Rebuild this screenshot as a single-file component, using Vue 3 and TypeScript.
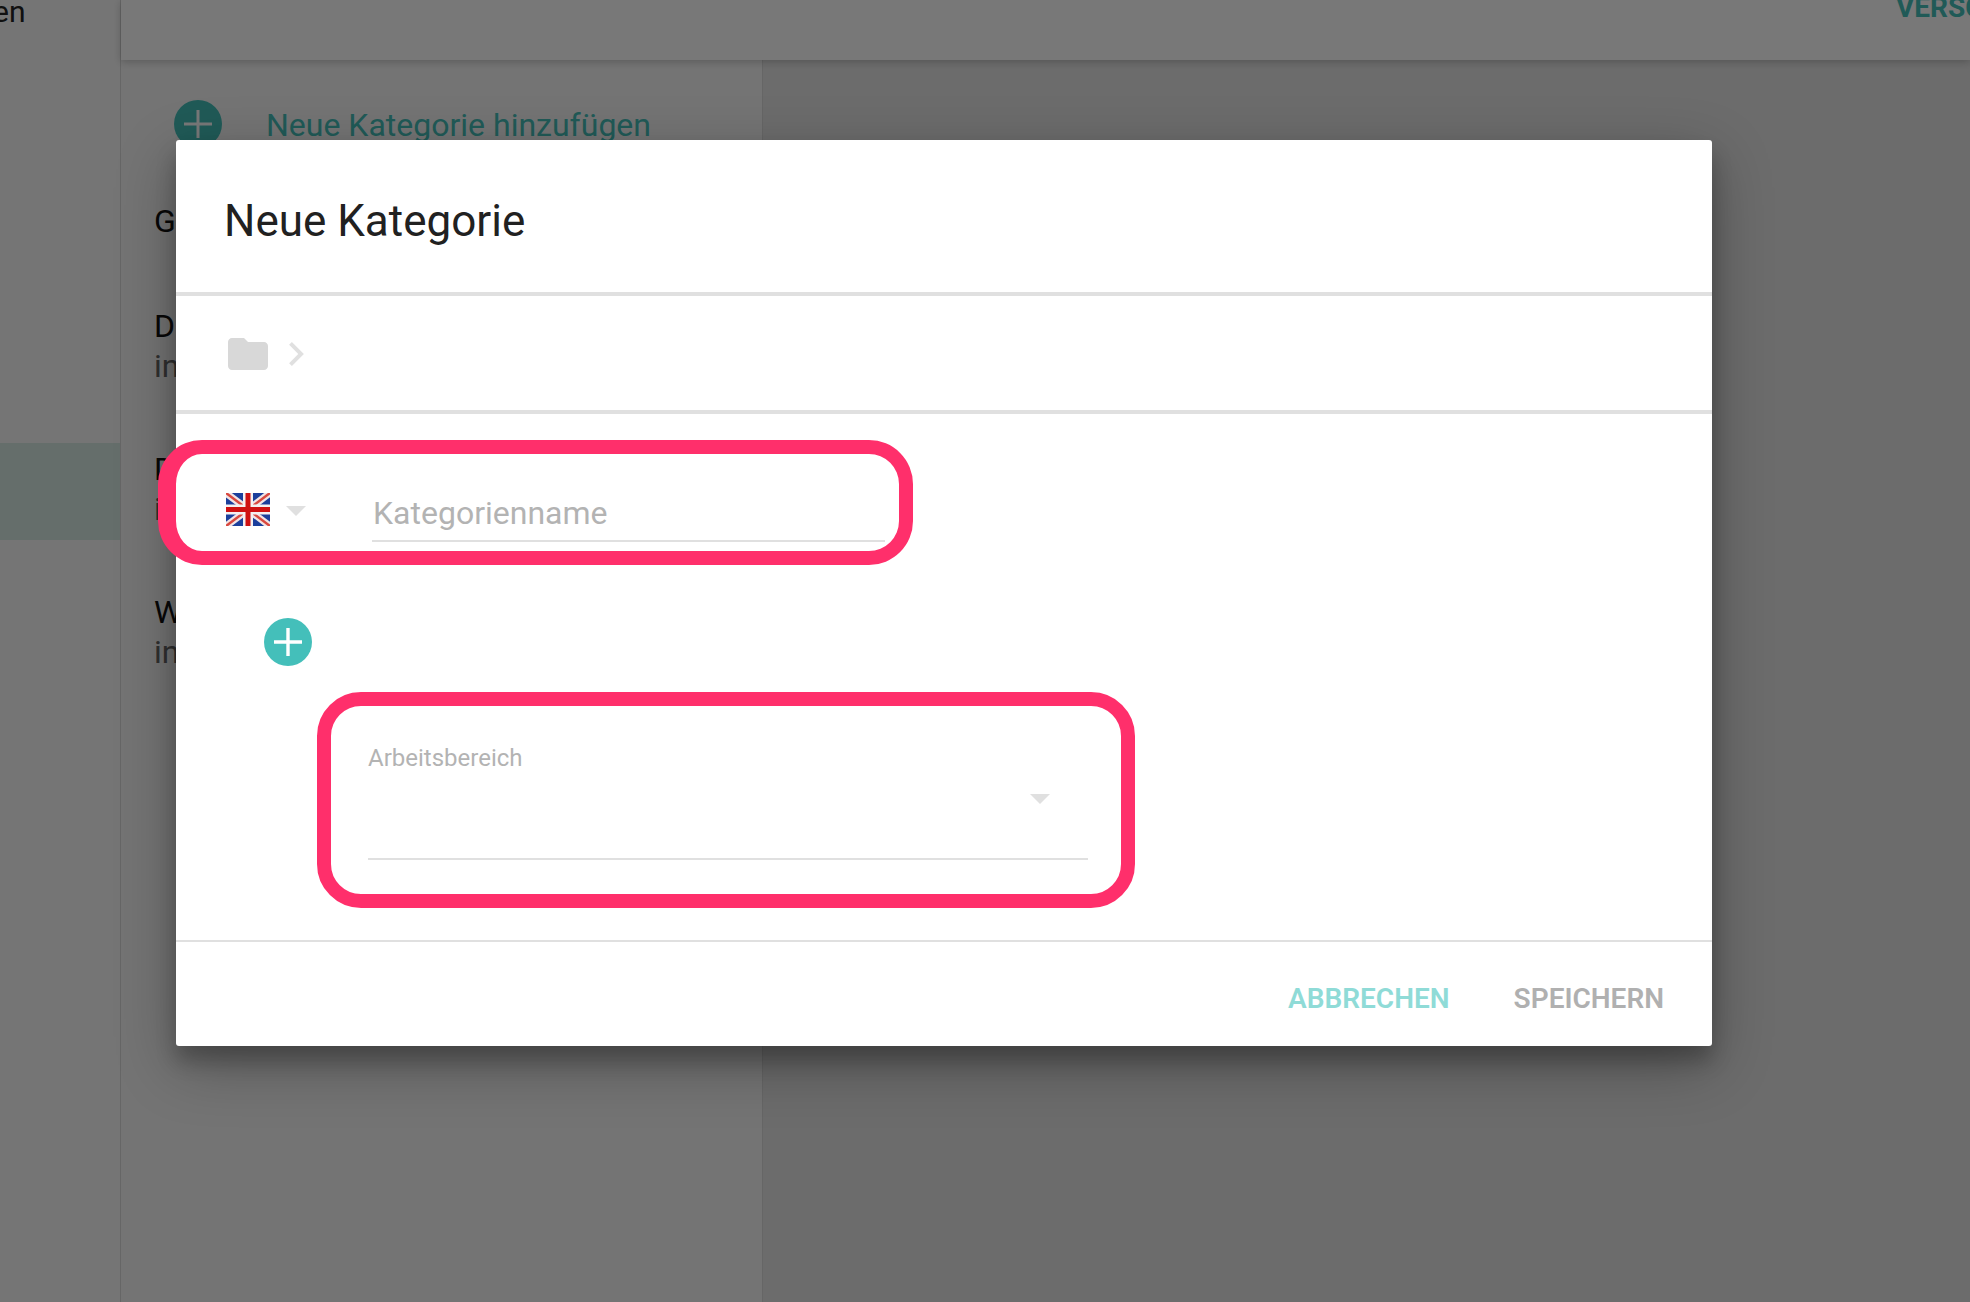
<script setup lang="ts">
const rows = [
  { title: 'D', sub: 'in' },
  { title: 'D', sub: 'in' },
  { title: 'W', sub: 'in' },
]
</script>

<template>
  <div class="page">
    <aside class="nav">
      <div class="nav-text">en</div>
      <div class="nav-selected"></div>
    </aside>
    <div class="main">
      <header class="topbar"><span class="top-action">VERSCHIEBEN</span></header>
      <div class="content">
        <section class="list">
          <div class="add-row">
            <span class="add-dark">
              <svg width="28" height="28" viewBox="0 0 28 28"><path d="M12.5 0h3v12.5H28v3H15.500V28h-3V15.500H0v-3h12.500z" fill="#fff" /></svg>
            </span>
            <span class="add-label">Neue Kategorie hinzufügen</span>
          </div>
          <div class="group-title">G</div>
          <div v-for="(r, i) in rows" :key="i" class="item">
            <div class="item-title">{{ r.title }}</div>
            <div class="item-sub">{{ r.sub }}</div>
          </div>
        </section>
        <section class="detail"></section>
      </div>
    </div>

    <div class="scrim"></div>

    <div class="dialog">
      <h2 class="dialog-title">Neue Kategorie</h2>
      <div class="crumbs">
        <svg width="40" height="32" viewBox="2 4 20 16"><path d="M10 4H4c-1.100 0-2 .9-2 2v12c0 1.100.9 2 2 2h16c1.100 0 2-.9 2-2V8c0-1.100-.9-2-2-2h-8l-2-2z" fill="#d8d8d8" /></svg>
        <svg width="15" height="24" viewBox="8.590 6 7.410 12"><path d="M10 6L8.590 7.410 13.170 12l-4.580 4.590L10 18l6-6z" fill="#e0e0e0" /></svg>
      </div>
      <div class="form">
        <div class="lang-row">
          <svg class="flag" width="44" height="33" viewBox="0 0 44 33">
            <rect width="44" height="33" fill="#1b3f9c" />
            <path d="M0 0L44 33M44 0L0 33" stroke="#f1e4e4" stroke-width="7" />
            <path d="M0 0L44 33M44 0L0 33" stroke="#d9483f" stroke-width="2.500" />
            <path d="M22 0V33M0 16.500H44" stroke="#f4f0f0" stroke-width="10" />
            <path d="M22 0V33M0 16.500H44" stroke="#cf1111" stroke-width="5" />
          </svg>
          <span class="tri lang-tri"></span>
          <div class="name-field">Kategorienname</div>
        </div>
        <span class="add-round">
          <svg width="28" height="28" viewBox="0 0 28 28"><path d="M12.300 0h3.400v12.300H28v3.400H15.700V28h-3.400V15.700H0v-3.400h12.300z" fill="#fff" /></svg>
        </span>
        <div class="work-field">
          <div class="work-label">Arbeitsbereich</div>
          <span class="tri work-tri"></span>
        </div>
      </div>
      <footer class="actions">
        <span class="btn cancel">ABBRECHEN</span>
        <span class="btn save">SPEICHERN</span>
      </footer>
      <div class="mark mark-one"></div>
      <div class="mark mark-two"></div>
    </div>
  </div>
</template>

<style scoped>
.page {
  position: relative;
  display: flex;
  width: 1970px;
  height: 1302px;
  overflow: hidden;
  font-family: Roboto, "Liberation Sans", sans-serif;
  background: #fff;
}
.nav {
  flex: 0 0 121px;
  box-sizing: border-box;
  background: #f9f9f9;
  border-right: 1px solid #d8d8d8;
}
.nav-text {
  height: 437px;
  margin-left: -7px;
  margin-top: -6px;
  font-size: 30px;
  line-height: 36px;
  color: #222;
}
.nav-selected {
  height: 97px;
  margin-top: 12px;
  background: #d7eae4;
}
.main {
  flex: 1;
  display: flex;
  flex-direction: column;
  min-width: 0;
}
.topbar {
  position: relative;
  z-index: 1;
  flex: 0 0 60px;
  background: #fff;
  box-shadow: 0 2px 8px rgba(0, 0, 0, 0.22);
}
.top-action {
  display: block;
  margin-left: 1775px;
  margin-top: -6px;
  width: 260px;
  font-size: 28px;
  line-height: 28px;
  font-weight: 700;
  color: #44bfba;
  white-space: nowrap;
}
.content {
  flex: 1;
  display: flex;
}
.list {
  flex: 0 0 642px;
  box-sizing: border-box;
  padding-top: 40px;
  background: #f7f7f7;
  border-right: 1px solid #d8d8d8;
}
.detail {
  flex: 1;
  background: #e6e6e6;
}
.add-row {
  display: flex;
  align-items: center;
  height: 48px;
  padding-left: 53px;
}
.add-dark {
  display: flex;
  align-items: center;
  justify-content: center;
  width: 48px;
  height: 48px;
  border-radius: 50%;
  background: #44bfba;
}
.add-label {
  margin-left: 44px;
  padding-top: 2px;
  font-size: 32px;
  color: #44bfba;
  white-space: nowrap;
}
.group-title {
  margin: 53px 0 65px 33px;
  font-size: 32px;
  line-height: 40px;
  color: #111;
}
.item {
  height: 143px;
  padding-left: 33px;
  font-size: 32px;
  line-height: 40px;
}
.item-title {
  color: #111;
}
.item-sub {
  color: #666;
}
.scrim {
  position: absolute;
  inset: 0;
  z-index: 2;
  background: rgba(0, 0, 0, 0.53);
}
.dialog {
  position: absolute;
  z-index: 3;
  left: 176px;
  top: 140px;
  width: 1536px;
  height: 906px;
  display: flex;
  flex-direction: column;
  background: #fff;
  border-radius: 3px;
  box-shadow: 0 19px 60px rgba(0, 0, 0, 0.3), 0 15px 20px rgba(0, 0, 0, 0.22);
}
.dialog-title {
  flex: 0 0 156px;
  box-sizing: border-box;
  margin: 0;
  padding: 55px 0 0 48px;
  font-size: 44px;
  line-height: 52px;
  font-weight: 400;
  color: #212121;
  border-bottom: 4px solid #e0e0e0;
}
.crumbs {
  flex: 0 0 118px;
  box-sizing: border-box;
  display: flex;
  align-items: center;
  gap: 21px;
  padding: 2px 0 0 52px;
  border-bottom: 4px solid #e0e0e0;
}
.form {
  flex: 1;
  display: flex;
  flex-direction: column;
  align-items: flex-start;
}
.lang-row {
  display: flex;
  align-items: flex-start;
  height: 58px;
  margin: 70px 0 0 50px;
}
.flag {
  margin-top: 9px;
  filter: blur(0.5px);
}
.tri {
  display: block;
  width: 0;
  height: 0;
  border-left: 10px solid transparent;
  border-right: 10px solid transparent;
  border-top: 10px solid #e0e0e0;
}
.lang-tri {
  margin: 22px 0 0 16px;
}
.name-field {
  box-sizing: border-box;
  width: 513px;
  height: 58px;
  margin-left: 66px;
  padding: 7px 0 0 1px;
  font-size: 32px;
  line-height: 44px;
  color: #b3b3b3;
  border-bottom: 2px solid #e0e0e0;
}
.add-round {
  display: flex;
  align-items: center;
  justify-content: center;
  width: 48px;
  height: 48px;
  margin: 76px 0 0 88px;
  border-radius: 50%;
  background: #44bfba;
}
.work-field {
  box-sizing: border-box;
  display: flex;
  flex-direction: column;
  width: 720px;
  height: 119px;
  margin: 75px 0 0 192px;
  border-bottom: 2px solid #e0e0e0;
}
.work-label {
  font-size: 24px;
  line-height: 34px;
  color: #b3b3b3;
}
.work-tri {
  align-self: flex-end;
  margin: 19px 38px 0 0;
}
.actions {
  flex: 0 0 106px;
  box-sizing: border-box;
  display: flex;
  align-items: center;
  justify-content: flex-end;
  gap: 64px;
  padding: 10px 48px 0 0;
  border-top: 2px solid #e0e0e0;
}
.btn {
  font-size: 28px;
  font-weight: 600;
  line-height: 32px;
}
.cancel {
  color: #8fdbd7;
}
.save {
  color: #b0b0b0;
}
.mark {
  position: absolute;
  box-sizing: border-box;
  border: 14px solid #ff2f6b;
  border-radius: 44px;
  pointer-events: none;
}
.mark-one {
  left: -18px;
  top: 300px;
  width: 755px;
  height: 125px;
  border-left-width: 18px;
}
.mark-two {
  left: 141px;
  top: 552px;
  width: 818px;
  height: 216px;
}
</style>
